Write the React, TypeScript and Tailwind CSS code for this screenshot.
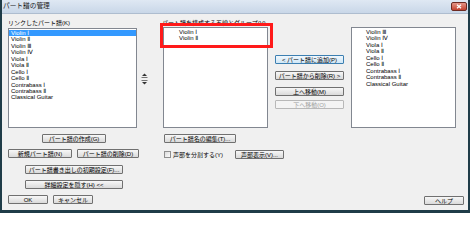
import React from 'react';

const parts = [
  'Violin Ⅰ',
  'Violin Ⅱ',
  'Violin Ⅲ',
  'Violin Ⅳ',
  'Viola Ⅰ',
  'Viola Ⅱ',
  'Cello Ⅰ',
  'Cello Ⅱ',
  'Contrabass Ⅰ',
  'Contrabass Ⅱ',
  'Classical Guitar',
];

type Kind = 'normal' | 'default' | 'disabled';

function Btn({ children, className = '', kind = 'normal' }: { children: React.ReactNode; className?: string; kind?: Kind }) {
  const look =
    kind === 'default'
      ? 'border-[#3c7fb1] from-[#f1f8fd] to-[#cfe7f7] text-black'
      : kind === 'disabled'
      ? 'border-[#b8b8b8] from-[#f4f4f4] to-[#f4f4f4] text-[#a0a0a0]'
      : 'border-[#707070] from-[#f7f7f7] to-[#dadada] text-black';
  return (
    <button
      type="button"
      className={`flex items-center justify-center h-[9px] border rounded-[1px] bg-linear-to-b ${look} text-[6px] leading-none whitespace-nowrap ${className}`}
    >
      {children}
    </button>
  );
}

function ListBox({ items, indent, selected, className = '' }: { items: string[]; indent: string; selected?: number; className?: string }) {
  return (
    <div className={`border border-[#828790] bg-white pt-[1px] ${className}`}>
      {items.map((p, i) => (
        <div
          key={p}
          className={`h-[6.45px] leading-[6.45px] text-[6px] whitespace-nowrap ${indent} ${
            i === selected ? 'bg-[#3399ff] text-white' : 'text-black'
          }`}
        >
          {p}
        </div>
      ))}
    </div>
  );
}

export default function App() {
  return (
    <div className="w-[470px] h-[213px] bg-[#f0f0f0] border-x-2 border-b-[3px] border-[#1f3c48] font-['Liberation_Sans','DejaVu_Sans','Noto_Sans_CJK_JP',sans-serif] text-black overflow-hidden flex flex-col">
      {/* title bar */}
      <div className="h-[14px] shrink-0 flex items-center justify-between bg-linear-to-b from-[#dfe8f3] to-[#c9d7e8] border-b border-[#aebdcf] pl-[1px] pr-[1px]">
        <span className="text-[6.7px] leading-none text-[#1b1b1b]">パート譜の管理</span>
        <button
          type="button"
          className="w-[16px] h-[9px] rounded-[2px] border border-[#6d2a22] bg-linear-to-b from-[#e49487] to-[#c3402e] flex items-center justify-center"
        >
          <svg width="6" height="5" viewBox="0 0 6 5">
            <path d="M1 0.8 L5 4.2 M5 0.8 L1 4.2" stroke="white" strokeWidth="1.3" />
          </svg>
        </button>
      </div>

      <div className="flex items-start pl-[6px]">
        {/* linked parts */}
        <div className="w-[129px] mt-[5px] shrink-0">
          <div className="h-[8px] leading-[8px] text-[6px] whitespace-nowrap">リンクしたパート譜(K)</div>
          <ListBox items={parts} indent="pl-[2px]" selected={0} className="mt-[1px] h-[100px]" />
          <Btn className="ml-[34px] mt-[6px] w-[64px]">パート譜の作成(G)</Btn>
          <div className="flex gap-[5px] mt-[6px]">
            <Btn className="w-[64px] shrink-0">新規パート譜(N)</Btn>
            <Btn className="w-[62px] shrink-0">パート譜の削除(D)</Btn>
          </div>
          <Btn className="ml-[17px] mt-[7px] w-[98px]">パート譜書き出しの初期設定(F)...</Btn>
          <Btn className="ml-[17px] mt-[6px] w-[98px]">詳細設定を隠す(H) &lt;&lt;</Btn>
        </div>

        {/* order arrows */}
        <div className="ml-[4px] mt-[59px] w-[7px] flex flex-col gap-[2px]">
          <svg width="7" height="5" viewBox="0 0 7 5">
            <path d="M3.5 0.5 L6 3 L1 3 Z" fill="#333" />
            <path d="M0.5 4.5 H6.5" stroke="#555" strokeWidth="0.8" />
          </svg>
          <svg width="7" height="5" viewBox="0 0 7 5">
            <path d="M0.5 0.5 H6.5" stroke="#555" strokeWidth="0.8" />
            <path d="M1 2 L6 2 L3.5 4.5 Z" fill="#333" />
          </svg>
        </div>

        {/* staves of the part */}
        <div className="relative ml-[15px] mt-[5px] w-[105px] shrink-0">
          <div className="h-[8px] leading-[8px] text-[6px] whitespace-nowrap -ml-[1px]">パート譜を構成する五線とグループ(V)</div>
          <ListBox items={parts.slice(0, 2)} indent="pl-[15px]" className="h-[101px]" />
          <div className="absolute left-[-3px] top-[4px] w-[113px] h-[25px] border-[3px] border-[#ff1a1a]" />
          <Btn className="ml-[1px] mt-[6px] w-[72px]">パート譜名の編集(T)...</Btn>
          <div className="flex items-center mt-[7px] ml-[1px]">
            <span className="w-[7px] h-[7px] shrink-0 border border-[#8f8f8f] bg-linear-to-br from-[#dcdcdc] to-[#fbfbfb]" />
            <span className="w-[64px] shrink-0 pl-[2px] text-[6px] leading-none whitespace-nowrap">声部を分割する(Y)</span>
            <Btn className="w-[49px] shrink-0">声部表示(V)...</Btn>
          </div>
        </div>

        {/* move buttons */}
        <div className="ml-[7px] mt-[41px] w-[69px] shrink-0 flex flex-col">
          <Btn kind="default" className="w-full">&lt; パート譜に追加(P)</Btn>
          <Btn className="w-full mt-[7px]">パート譜から削除(R) &gt;</Btn>
          <Btn className="w-full mt-[7px]">上へ移動(M)</Btn>
          <Btn kind="disabled" className="w-full mt-[4px]">下へ移動(O)</Btn>
        </div>

        {/* remaining staves */}
        <ListBox items={parts.slice(2)} indent="pl-[14px]" className="ml-[7px] mt-[13px] w-[105px] h-[101px] shrink-0" />
      </div>

      <div className="flex items-start pl-[6px] pr-[4px] mt-[6px]">
        <Btn className="w-[40px]">OK</Btn>
        <Btn className="w-[40px] ml-[5px]">キャンセル</Btn>
        <Btn className="w-[40px] ml-auto mt-[1px]">ヘルプ</Btn>
      </div>
    </div>
  );
}
